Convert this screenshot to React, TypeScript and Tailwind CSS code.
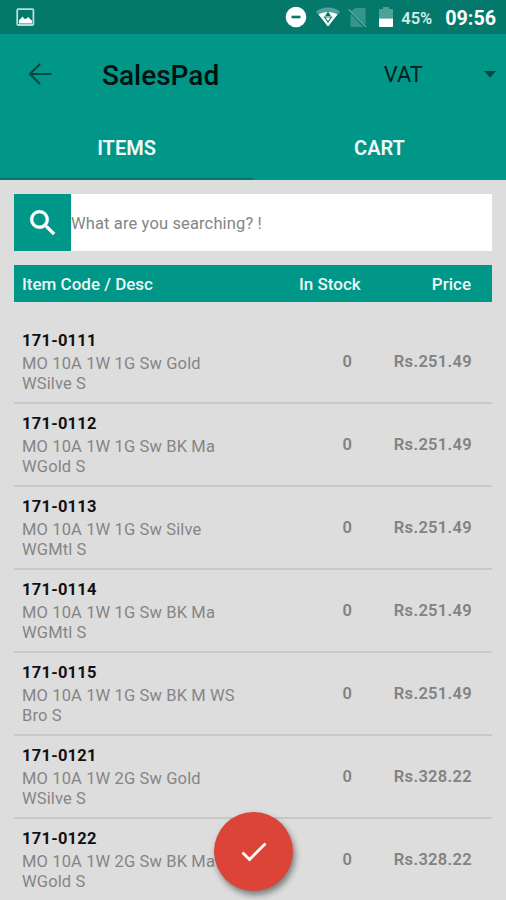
import { useState } from 'react';

interface Item {
  code: string;
  desc: [string, string];
  stock: number;
  price: string;
}

const ITEMS: Item[] = [
  { code: '171-0111', desc: ['MO 10A 1W 1G Sw Gold', 'WSilve S'], stock: 0, price: '251.49' },
  { code: '171-0112', desc: ['MO 10A 1W 1G Sw BK Ma', 'WGold S'], stock: 0, price: '251.49' },
  { code: '171-0113', desc: ['MO 10A 1W 1G Sw Silve', 'WGMtl S'], stock: 0, price: '251.49' },
  { code: '171-0114', desc: ['MO 10A 1W 1G Sw BK Ma', 'WGMtl S'], stock: 0, price: '251.49' },
  { code: '171-0115', desc: ['MO 10A 1W 1G Sw BK M WS', 'Bro S'], stock: 0, price: '251.49' },
  { code: '171-0121', desc: ['MO 10A 1W 2G Sw Gold', 'WSilve S'], stock: 0, price: '328.22' },
  { code: '171-0122', desc: ['MO 10A 1W 2G Sw BK Ma', 'WGold S'], stock: 0, price: '328.22' },
];

function StatusBar() {
  return (
    <div className="flex h-[34px] shrink-0 items-center bg-[#04796b] pl-4 pr-[10px] text-white">
      <svg className="h-[19px] w-[19px]" viewBox="0 0 19 19" fill="none">
        <rect x="1.2" y="1.2" width="16.2" height="15.8" rx="1" stroke="#b9dcd6" strokeWidth="1.8" />
        <path d="M3 15.5V12l2-1.5 1.5-2 2 2.5 2-.5 2-1.5 1.5 2 2 1.5v3z" fill="#fff" />
      </svg>

      <div className="ml-auto flex items-center">
        <svg className="h-[22px] w-[22px]" viewBox="0 0 22 22">
          <circle cx="11" cy="11" r="10.3" fill="#fff" />
          <path d="M6.5 11h9" stroke="#04796b" strokeWidth="2.6" />
        </svg>
        <svg className="ml-[9px] h-5 w-6" viewBox="0 0 24 20">
          <path d="M0 4.5C6.5-1 17.5-1 24 4.5L12 19.5z" fill="#4fa297" />
          <path d="M2.5 7.6C8 4 16 4 21.5 7.6L12 19.5z" fill="#fff" />
          <path d="M8.5 10h7L12 15z" fill="none" stroke="#04796b" strokeWidth="1.1" />
          <path d="M12 4.5l3 4.5H9z" fill="#04796b" />
        </svg>
        <svg className="ml-[8px] h-[21px] w-[19px]" viewBox="0 0 19 21">
          <path d="M7 1h9.5c.6 0 1 .4 1 1v15.5L3 4.800z" fill="#36958a" />
          <path d="M2.5 6.5L15 20H3.5c-.6 0-1-.4-1-1z" fill="#36958a" />
          <path d="M.8 2.5L18 20" stroke="#55a89e" strokeWidth="1.5" />
        </svg>
        <svg className="ml-3 h-5 w-[14px]" viewBox="0 0 14 20">
          <path d="M4 0h6v2h3c.6 0 1 .4 1 1v8.5H0V3c0-.6.4-1 1-1h3z" fill="#4da195" />
          <path d="M0 11.5h14V19c0 .6-.4 1-1 1H1c-.6 0-1-.4-1-1z" fill="#fff" />
        </svg>
        <span className="ml-2 mt-[3px] text-[16.5px] font-semibold leading-5 text-[#d5ebe7]">45%</span>
        <span className="ml-[13px] mt-[4px] text-[19.7px] font-bold leading-5">09:56</span>
      </div>
    </div>
  );
}

function AppBar() {
  return (
    <div className="flex h-[80px] shrink-0 items-center pl-[28px] pr-[10px]">
      <svg className="h-[22px] w-[24px]" viewBox="0 0 24 22" fill="none" stroke="#05483f" strokeWidth="2.2">
        <path d="M23.5 11H2.5M12 1L2 11l10 10" />
      </svg>
      <h1 className="ml-[50px] mt-[3px] text-[28px] font-medium text-[#00110f]">SalesPad</h1>
      <span className="ml-auto mr-[61px] text-[22px] text-[#00211d]">VAT</span>
      <svg className="h-[7px] w-3" viewBox="0 0 12 7">
        <path d="M0 0h12L6 6.5z" fill="#05483f" />
      </svg>
    </div>
  );
}

function ItemRow({ item }: { item: Item }) {
  return (
    <li className="flex h-[83px] shrink-0 border-b-2 border-[#c9c9c9] px-2 pt-[10px]">
      <div className="w-[250px]">
        <p className="text-[16.5px] font-bold leading-5 tracking-[0.25px] text-[#111]">{item.code}</p>
        <p className="mt-[3px] whitespace-nowrap text-[16.5px] leading-5 tracking-[0.13px] text-[#858585]">
          {item.desc[0]}
          <br />
          {item.desc[1]}
        </p>
      </div>
      <p className="w-[80px] pt-[21px] text-right text-[16.5px] font-semibold leading-5 text-[#828282]">{item.stock}</p>
      <p className="ml-auto mr-[12px] pt-[21px] text-right text-[16.5px] font-semibold leading-5 tracking-[0.3px] text-[#828282]">
        Rs.{item.price}
      </p>
    </li>
  );
}

export default function App() {
  const [tab, setTab] = useState('ITEMS');

  return (
    <div className="relative flex h-[900px] w-[506px] flex-col overflow-hidden bg-[#dddddd] font-[Roboto,sans-serif]">
      <StatusBar />

      <div className="flex h-[146px] shrink-0 flex-col bg-[#009688]">
        <AppBar />
        <div className="flex flex-1">
          {['ITEMS', 'CART'].map((t) => (
            <button
              key={t}
              onClick={() => setTab(t)}
              className={`flex-1 border-b-2 pt-[3px] text-[20px] font-semibold text-[#f2faf9] ${
                tab === t ? 'border-[#04796b]' : 'border-transparent'
              }`}
            >
              {t}
            </button>
          ))}
        </div>
      </div>

      <div className="flex flex-1 flex-col px-[14px] pt-[14px]">
        {/* Search */}
        <div className="flex h-[57px] shrink-0 bg-white">
          <div className="flex w-[57px] items-center justify-center bg-[#009688]">
            <svg className="h-[34px] w-[34px]" viewBox="0 0 24 24" fill="#fff" stroke="#fff" strokeWidth="0.4">
              <path d="M15.5 14h-.79l-.28-.27A6.471 6.471 0 0 0 16 9.5 6.5 6.5 0 1 0 9.5 16c1.61 0 3.09-.59 4.23-1.57l.27.28v.79l5 4.99L20.49 19l-4.99-5zm-6 0C7.01 14 5 11.99 5 9.5S7.01 5 9.5 5 14 7.01 14 9.5 11.99 14 9.5 14z" />
            </svg>
          </div>
          <input
            placeholder="What are you searching? !"
            className="min-w-0 flex-1 pt-[3px] text-[16.5px] tracking-[0.13px] outline-none placeholder:text-[#858585]"
          />
        </div>

        {/* Column titles */}
        <div className="mt-[14px] flex h-[37px] shrink-0 items-center bg-[#009688] px-2 pt-[3px] text-[17px] font-medium text-[#eaf6f4]">
          <span className="w-[277px]">Item Code / Desc</span>
          <span>In Stock</span>
          <span className="ml-auto mr-[13px]">Price</span>
        </div>

        <ul className="mt-[19px] flex flex-col">
          {ITEMS.map((item) => (
            <ItemRow key={item.code} item={item} />
          ))}
        </ul>
      </div>

      <button className="absolute left-[214px] top-[812px] flex h-[79px] w-[79px] items-center justify-center rounded-full bg-[#db4437] shadow-[2px_4px_6px_rgba(0,0,0,0.45)]">
        <svg className="h-[20px] w-[26px]" viewBox="0 0 26 20" fill="none" stroke="#fff" strokeWidth="2.8">
          <path d="M1.5 10.5l7 7L24.5 1.5" />
        </svg>
      </button>
    </div>
  );
}
